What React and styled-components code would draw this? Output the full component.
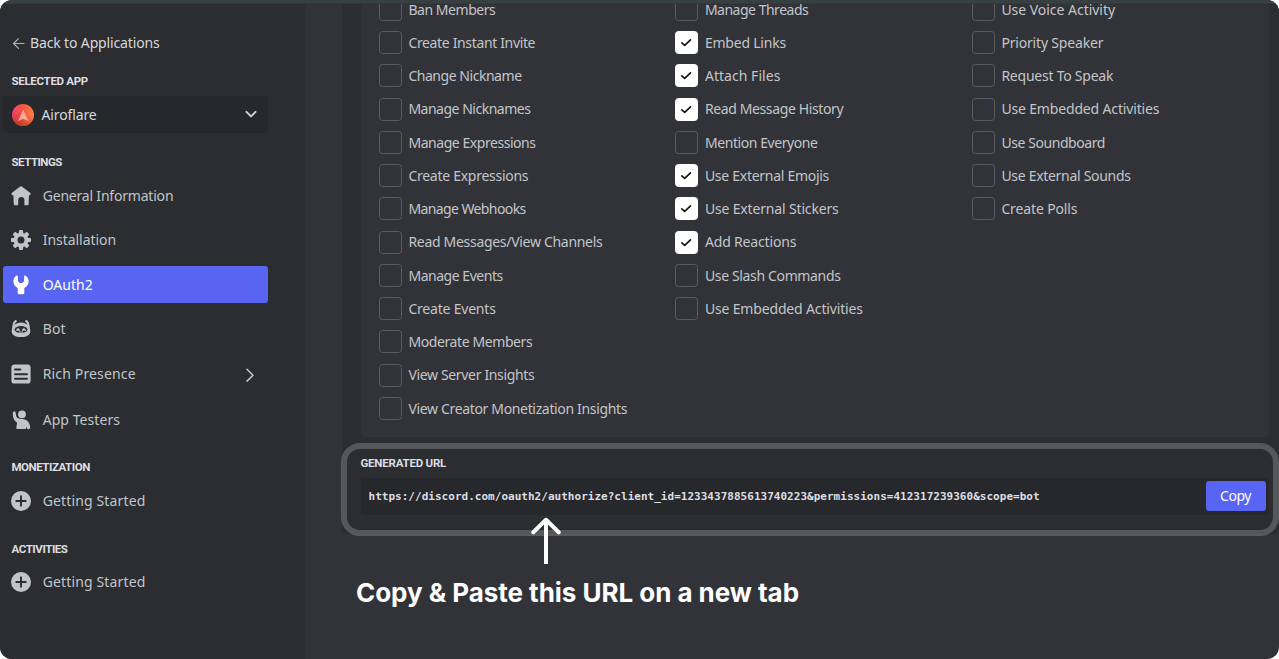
import React from "react";
import styled, { createGlobalStyle } from "styled-components";

const GlobalStyle = createGlobalStyle`
  *, *::before, *::after { box-sizing: border-box; }
  body {
    margin: 0;
    background: #fff;
    font-family: "Noto Sans", "Open Sans", sans-serif;
    font-size: 14px;
    color: #c3c5c9;
  }
`;

const Window = styled.div`
  display: flex;
  flex-direction: column;
  width: 1279px;
  height: 659px;
  overflow: hidden;
  border-radius: 12px;
  background: #323338;
`;

const TopStrip = styled.div`
  flex: none;
  height: 4px;
  background: #364040;
  border-bottom: 1px solid #323a3c;
`;

const Body = styled.div`
  display: flex;
  flex: 1;
  min-height: 0;
`;

const Sidebar = styled.aside`
  display: flex;
  flex-direction: column;
  flex: none;
  width: 305px;
  padding: 29px 37px 0 3px;
  background: #2c2d31;
`;

const Label = styled.span`
  white-space: nowrap;
  line-height: 20px;
  letter-spacing: ${(p) => p.$tracking || 0}px;
`;

const BackLink = styled.a`
  display: flex;
  align-items: center;
  gap: 5px;
  height: 20px;
  padding-left: 9px;
  color: #d6d8db;
`;

const Heading = styled.h2`
  margin: ${(p) => p.$top || 0}px 0 0 8.5px;
  font: 700 11.5px/14px Roboto, sans-serif;
  letter-spacing: ${(p) => p.$tracking}px;
  white-space: nowrap;
  color: #dcdee1;
`;

const AppSelect = styled.div`
  display: flex;
  align-items: center;
  gap: 7.5px;
  height: 37px;
  margin-top: 8px;
  padding: 0 10px 0 8px;
  border: 1px solid #26272a;
  border-radius: 4px;
  background: #27282c;
  color: #d6d8db;

  & > :last-child { margin-left: auto; }
`;

const Nav = styled.nav`
  display: flex;
  flex-direction: column;
  gap: 7.3px;
  margin-top: ${(p) => p.$top}px;
`;

const NavItem = styled.a`
  display: flex;
  align-items: center;
  gap: 11.7px;
  height: ${(p) => (p.$tall ? 39 : 37)}px;
  padding: 0 13px 0 8px;
  border-radius: 3px;
  background: ${(p) => (p.$active ? "#5765f2" : "transparent")};
  color: ${(p) => (p.$active ? "#fff" : "#c0c5c9")};

  & > svg { flex: none; }
  & > svg:nth-child(3) { margin-left: auto; }
`;

const Main = styled.main`
  display: flex;
  flex-direction: column;
  flex: 1;
  min-width: 0;
  padding-left: 37px;
`;

const Panel = styled.section`
  flex: none;
  height: 530px;
  padding: 0 10px 0 18.500px;
  background: #2c2d31;
`;

const Permissions = styled.div`
  display: grid;
  grid-template-columns: repeat(3, 296.5px);
  align-items: start;
  height: 433px;
  padding-left: 18.4px;
  overflow: hidden;
  border-radius: 0 0 4px 4px;
  background: #323338;
`;

const Column = styled.div`
  display: flex;
  flex-direction: column;
  margin-top: -11.2px;
`;

const Option = styled.label`
  display: flex;
  align-items: center;
  gap: 6.5px;
  height: 33.25px;

  & > :last-child { padding-top: 0.6px; }
`;

const Box = styled.span`
  display: flex;
  align-items: center;
  justify-content: center;
  flex: none;
  width: 23px;
  height: 23px;
  border: 1px solid ${(p) => (p.$checked ? "#fff" : "#5b5c63")};
  border-radius: 3.5px;
  background: ${(p) => (p.$checked ? "#fff" : "transparent")};
`;

const Generated = styled.section`
  position: relative;
  padding-top: 19px;

  & > h2 { margin-left: 0; }
`;

const HighlightRing = styled.div`
  position: absolute;
  top: 6px;
  left: -19.5px;
  width: 938px;
  height: 93px;
  border: 6px solid rgba(255, 255, 255, 0.2);
  border-radius: 19px;
`;

const UrlField = styled.div`
  display: flex;
  align-items: center;
  justify-content: space-between;
  height: 37px;
  margin-top: 8px;
  padding: 0 3.5px 1px 8px;
  border-radius: 3px;
  background: #27282c;
`;

const Url = styled.code`
  padding-top: 1px;
  font: 700 11px/16px "DejaVu Sans Mono", monospace;
  letter-spacing: 0.022px;
  color: #dcdee1;
`;

const CopyButton = styled.button`
  width: 60px;
  height: 30px;
  padding: 0;
  border: 0;
  border-radius: 3px;
  background: #5865f2;
  color: #fff;
  font: inherit;
`;

const Callout = styled.div`
  position: relative;
  display: flex;
  flex-direction: column;
  align-items: flex-start;
  margin-top: -17px;
  padding-left: 14px;

  & > svg { margin-left: 175px; }
`;

const CalloutText = styled.p`
  margin: 11px 0 0;
  font: 700 26px/36px Inter, sans-serif;
  letter-spacing: -0.04px;
  color: #fff;
`;

const Icon = ({ children, size = 20, ...rest }) => (
  <svg width={size} height={size} viewBox={`0 0 ${size} ${size}`} fill="currentColor" {...rest}>
    {children}
  </svg>
);

const HomeIcon = () => (
  <Icon>
    <path d="M8.9.7a1.7 1.7 0 0 1 2.2 0l8 6c.9.700.6 2.300-.5 2.500l-.6.100-.4 8.600c0 .8-.6 1.400-1.400 1.400h-2.800v-5.200a3.100 3.100 0 0 0-6.200 0v5.200H4.200c-.8 0-1.400-.6-1.400-1.400L2.400 9.300l-.8-.1C.4 9 .100 7.400 1 6.700z" />
  </Icon>
);

const GearIcon = () => (
  <Icon>
    <circle cx="10" cy="10" r="5.4" fill="none" stroke="currentColor" strokeWidth="3.8" />
    {[0, 45, 90, 135, 180, 225, 270, 315].map((a) => (
      <path key={a} d="M7.7 4 8 .9q.1-.9 1-.9h2q.9 0 1 .9l.3 3.1z" transform={`rotate(${a} 10 10)`} />
    ))}
  </Icon>
);

const WrenchIcon = () => (
  <Icon>
    <path d="M5.300.8C6.100.2 6.900.6 6.900 1.500v4.700l1.800 1.900h2.600l1.800-1.900V1.500c0-.9.8-1.300 1.600-.7 1.900 1.300 2.900 3.400 2.900 5.700 0 2.900-1.700 5.300-4.300 6.400v5.200c0 .7-.5 1.200-1.200 1.200H7.900c-.7 0-1.200-.5-1.200-1.200v-5.200C4.100 11.800 2.400 9.400 2.400 6.500c0-2.300 1-4.400 2.900-5.700z" />
  </Icon>
);

const BotIcon = () => (
  <Icon>
    <path d="M4.800 2 3 4.200 2.200 9M15.200 2l1.800 2.200.8 4.800" fill="none" stroke="currentColor" strokeWidth="2.100" strokeLinecap="round" />
    <path d="M10 3.500c5.300 0 9.300 3.800 9.300 8.500 0 4.200-3.300 6-9.300 6S.7 16.200.7 12C.7 7.300 4.700 3.500 10 3.500z" />
    <ellipse cx="10" cy="10.600" rx="6.500" ry="3.500" fill="#2c2d31" />
    <path d="M5.100 10.900q1.700-3 3.900-.2v1H5.100zM11 10.700q2.200-2.800 3.900.2v.8H11z" />
    <path d="M8 13h4" stroke="currentColor" strokeWidth="1" />
  </Icon>
);

const DocIcon = () => (
  <Icon>
    <rect x=".4" y=".4" width="19.200" height="19.200" rx="3.200" />
    <path d="M4 5.500h5.400M4 10.200h12M4 14.700h12" stroke="#2c2d31" strokeWidth="1.900" strokeLinecap="round" />
  </Icon>
);

const TesterIcon = () => (
  <Icon>
    <circle cx="11" cy="4.300" r="3.900" />
    <path d="M3.100 1.400c.8-.2 1.400.2 1.500 1l.5 3.200c.2 1.300.9 2.300 2.100 2.700 1.300.4 2.600.7 4 .7 4.800.3 7.900 3.400 8 8.800 0 .9-.7 1.400-1.500 1.400l-1.600-.1-.6-2.500-.8 2.500H6.600c-.9 0-1.400-.6-1.300-1.400l.8-4.900C3.300 11 2.100 8.300 1.900 5.200L1.800 2.800c0-.8.5-1.300 1.300-1.400z" />
  </Icon>
);

const PlusIcon = () => (
  <Icon>
    <circle cx="10" cy="10" r="10" />
    <path d="M10 5.300v9.400M5.300 10h9.400" stroke="#2c2d31" strokeWidth="1.900" strokeLinecap="round" />
  </Icon>
);

const BackArrow = () => (
  <Icon size={13} fill="none" stroke="#aeb1b6" strokeWidth="1.200" strokeLinecap="round" strokeLinejoin="round">
    <path d="M12 6.500H1.600M6.500 1.600 1.600 6.500l4.900 4.900" />
  </Icon>
);

const ChevronDown = () => (
  <Icon size={12} fill="none" stroke="#d0d3d6" strokeWidth="2" strokeLinecap="round" strokeLinejoin="round">
    <path d="M1.500 2.900 6 7.400l4.500-4.500" />
  </Icon>
);

const ChevronRight = () => (
  <Icon size={14} fill="none" stroke="#c4c8cc" strokeWidth="1.500" strokeLinecap="round" strokeLinejoin="round" transform="translate(2 1)">
    <path d="M4 1.300 10 7.200l-6 5.900" />
  </Icon>
);

const CheckIcon = () => (
  <Icon size={13} fill="none" stroke="#111214" strokeWidth="1.600" strokeLinecap="round" strokeLinejoin="round">
    <path d="M1.800 6.800 4.700 9.400l5.800-5.600" />
  </Icon>
);

const Avatar = () => (
  <svg width="22" height="22" viewBox="0 0 22 22">
    <defs>
      <linearGradient id="flare" x1="0" y1=".3" x2="1" y2=".5">
        <stop offset="0" stopColor="#fb3f80" />
        <stop offset=".42" stopColor="#f4553f" />
        <stop offset="1" stopColor="#fb8142" />
      </linearGradient>
      <linearGradient id="shade" x1=".6" y1=".45" x2=".4" y2="1">
        <stop offset="0" stopColor="#c23520" stopOpacity="0" />
        <stop offset="1" stopColor="#a8321f" stopOpacity=".75" />
      </linearGradient>
    </defs>
    <circle cx="11" cy="11" r="11" fill="url(#flare)" />
    <circle cx="11" cy="11" r="11" fill="url(#shade)" />
    <path d="M11.200 5.700 16.300 17l-5.100-2.200L6 17z" fill="#ffaa9c" />
  </svg>
);

const UpArrow = () => (
  <svg width="30" height="47" viewBox="0 0 30 47" fill="none" stroke="#fff" strokeWidth="4">
    <path d="M15 47V3" />
    <path d="M2.300 15.300 15 2.800l12.700 12.500" strokeLinecap="round" strokeLinejoin="round" />
  </svg>
);

const settings = [
  { text: "General Information", icon: HomeIcon, tracking: -0.2 },
  { text: "Installation", icon: GearIcon, tracking: -0.04 },
  { text: "OAuth2", icon: WrenchIcon, tracking: 0, active: true },
  { text: "Bot", icon: BotIcon, tracking: 0.15 },
  { text: "Rich Presence", icon: DocIcon, tracking: 0.15, expandable: true },
  { text: "App Testers", icon: TesterIcon, tracking: 0.06 },
];

const gettingStarted = [{ text: "Getting Started", icon: PlusIcon, tracking: 0.14 }];

// Each entry: label, letter spacing, checked.
const permissions = [
  [
    ["Ban Members", -0.45],
    ["Create Instant Invite", -0.35],
    ["Change Nickname", -0.46],
    ["Manage Nicknames", -0.49],
    ["Manage Expressions", -0.45],
    ["Create Expressions", -0.27],
    ["Manage Webhooks", -0.6],
    ["Read Messages/View Channels", -0.3],
    ["Manage Events", -0.46],
    ["Create Events", -0.2],
    ["Moderate Members", -0.4],
    ["View Server Insights", -0.34],
    ["View Creator Monetization Insights", -0.34],
  ],
  [
    ["Manage Threads", -0.49],
    ["Embed Links", -0.22, true],
    ["Attach Files", 0.04, true],
    ["Read Message History", -0.38, true],
    ["Mention Everyone", -0.42],
    ["Use External Emojis", -0.28, true],
    ["Use External Stickers", -0.16, true],
    ["Add Reactions", -0.16, true],
    ["Use Slash Commands", -0.35],
    ["Use Embedded Activities", -0.16],
  ],
  [
    ["Use Voice Activity", -0.03],
    ["Priority Speaker", -0.18],
    ["Request To Speak", -0.24],
    ["Use Embedded Activities", -0.16],
    ["Use Soundboard", -0.43],
    ["Use External Sounds", -0.3],
    ["Create Polls", -0.13],
  ],
];

const NavGroup = ({ items, top }) => (
  <Nav $top={top}>
    {items.map(({ text, icon: Glyph, tracking, active, expandable }) => (
      <NavItem key={text} $active={active} $tall={expandable}>
        <Glyph />
        <Label $tracking={tracking}>{text}</Label>
        {expandable && <ChevronRight />}
      </NavItem>
    ))}
  </Nav>
);

export default function App() {
  return (
    <>
      <GlobalStyle />
      <Window>
        <TopStrip />
        <Body>
          <Sidebar>
            <BackLink>
              <BackArrow />
              <Label $tracking={-0.14}>Back to Applications</Label>
            </BackLink>
            <Heading $top={21} $tracking={-0.3}>SELECTED APP</Heading>
            <AppSelect>
              <Avatar />
              <Label $tracking={-0.12}>Airoflare</Label>
              <ChevronDown />
            </AppSelect>
            <Heading $top={22} $tracking={-0.5}>SETTINGS</Heading>
            <NavGroup items={settings} top={8.7} />
            <Heading $top={22} $tracking={-0.46}>MONETIZATION</Heading>
            <NavGroup items={gettingStarted} top={8} />
            <Heading $top={22.5} $tracking={-0.42}>ACTIVITIES</Heading>
            <NavGroup items={gettingStarted} top={8} />
          </Sidebar>
          <Main>
            <Panel>
              <Permissions>
                {permissions.map((column, i) => (
                  <Column key={i}>
                    {column.map(([text, tracking, checked]) => (
                      <Option key={text}>
                        <Box $checked={checked}>{checked && <CheckIcon />}</Box>
                        <Label $tracking={tracking}>{text}</Label>
                      </Option>
                    ))}
                  </Column>
                ))}
              </Permissions>
              <Generated>
                <HighlightRing />
                <Heading $tracking={-0.22}>GENERATED URL</Heading>
                <UrlField>
                  <Url>https://discord.com/oauth2/authorize?client_id=1233437885613740223&amp;permissions=412317239360&amp;scope=bot</Url>
                  <CopyButton>
                    <Label $tracking={-0.45}>Copy</Label>
                  </CopyButton>
                </UrlField>
              </Generated>
            </Panel>
            <Callout>
              <UpArrow />
              <CalloutText>Copy &amp; Paste this URL on a new tab</CalloutText>
            </Callout>
          </Main>
        </Body>
      </Window>
    </>
  );
}
